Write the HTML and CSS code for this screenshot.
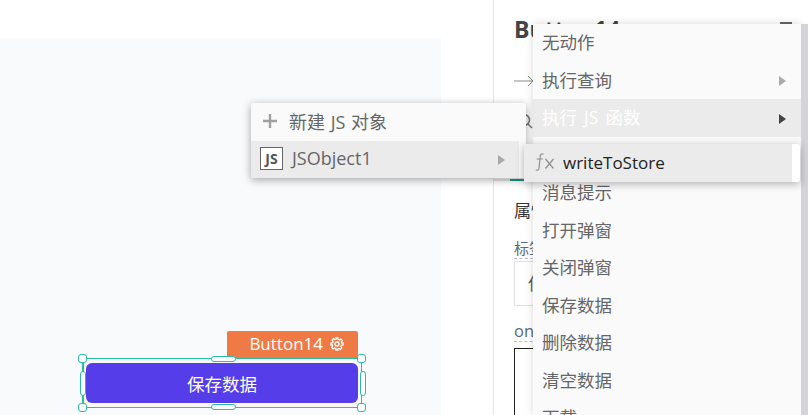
FILE: index.html
```html
<!DOCTYPE html>
<html lang="zh">
<head>
<meta charset="UTF-8" />
<title>Button14</title>
<link rel="stylesheet" href="styles.css">
</head>
<body>
<div class="workspace">
  <div class="canvas">
    <div class="widget">
      <div class="widget-tag">
        <span>Button14</span>
        <svg class="gear" width="14" height="14" viewBox="0 0 14 14" fill="none" stroke="#fff" stroke-width="1.3">
          <circle cx="7" cy="7" r="2"/>
          <path d="M6 1h2l.3 1.6 1.2.5 1.4-.9 1.4 1.4-.9 1.4.5 1.2L13 6v2l-1.6.3-.5 1.2.9 1.4-1.4 1.4-1.4-.9-1.2.5L8 13H6l-.3-1.6-1.2-.5-1.4.9-1.4-1.4.9-1.4-.5-1.2L1 8V6l1.6-.3.5-1.2-.9-1.4 1.4-1.4 1.4.9 1.2-.5z"/>
        </svg>
      </div>
      <div class="widget-frame">
        <button class="save-btn" type="button">保存数据</button>
        <i class="handle corner tl"></i>
        <i class="handle corner tr"></i>
        <i class="handle corner bl"></i>
        <i class="handle corner br"></i>
        <i class="handle horiz top"></i>
        <i class="handle horiz bottom"></i>
        <i class="handle vert left"></i>
        <i class="handle vert right"></i>
      </div>
    </div>
  </div>

  <aside class="panel">
    <div class="panel-title">
      <span>Button14</span>
      <i class="title-icon"></i>
    </div>
    <div class="panel-arrow">
      <svg width="20" height="12" viewBox="0 0 20 12" fill="none" stroke="#8a8a8a" stroke-width="1">
        <path d="M0 6h19M14 1l5 5-5 5"/>
      </svg>
    </div>
    <div class="panel-search">
      <svg width="16" height="16" viewBox="0 0 16 16" fill="none" stroke="#777" stroke-width="1.5">
        <circle cx="7" cy="7" r="5.5"/>
        <path d="M11 11l4 4"/>
      </svg>
    </div>
    <div class="panel-tabs"><i class="tab-active"></i></div>
    <div class="section-title">属性</div>
    <div class="field-label">标签</div>
    <div class="field-input">保存数据</div>
    <div class="field-label on">onClick</div>
    <div class="field-code"></div>
  </aside>
</div>

<!-- 动作菜单 -->
<ul class="menu menu-actions">
  <li>无动作</li>
  <li>执行查询<i class="caret"></i></li>
  <li class="active">执行 JS 函数<i class="caret dark"></i></li>
  <li></li>
  <li>消息提示</li>
  <li>打开弹窗</li>
  <li>关闭弹窗</li>
  <li>保存数据</li>
  <li>删除数据</li>
  <li>清空数据</li>
  <li>下载</li>
</ul>
<div class="menu-strip"></div>

<ul class="menu menu-js">
  <li>
    <svg class="plus" width="16" height="16" viewBox="0 0 16 16" stroke="#a0a0a0" stroke-width="2.4">
      <path d="M8 1v14M1 8h14"/>
    </svg>
    新建 JS 对象
  </li>
  <li class="hover">
    <span class="js-icon">JS</span>
    JSObject1
    <i class="caret"></i>
  </li>
</ul>

<ul class="menu menu-fn">
  <li class="hover">
    <svg class="fx" width="21" height="22" viewBox="0 0 21 22" fill="none" stroke="#8f8f8f" stroke-width="1.2">
      <path d="M9.5 3.2C7.5 2.4 6.4 3.4 6.2 5.5L5 17c-.2 2-1.3 2.7-3.2 2M2.5 8H9M11.5 8l8 9.5M19.5 8l-8 9.5"/>
    </svg>
    writeToStore
  </li>
</ul>
</body>
</html>
```

FILE: styles.css
```css
/* 基础 */
body {
  margin: 0;
  height: 415px;
  overflow: hidden;
  position: relative;
  background: #fff;
  font-family: "Open Sans", "Noto Sans CJK SC", sans-serif;
  color: #444;
}
.workspace {
  display: flex;
  height: 415px;
}
svg {
  display: block;
}

/* 画布 */
.canvas {
  width: 441px;
  margin: 38px 52px 0 0;
  background: #f8fafc;
  position: relative;
}
.widget {
  position: absolute;
  left: 82px;
  top: 293px;
  width: 280px;
}
.widget-tag {
  display: flex;
  align-items: center;
  justify-content: flex-end;
  gap: 7px;
  width: 131px;
  height: 27px;
  margin-left: 145px;
  padding: 0 14px 2px 0;
  box-sizing: border-box;
  background: #f07a45;
  border-radius: 2px 2px 0 0;
  color: #fff;
  font-size: 17px;
}
.widget-frame {
  position: relative;
  height: 50px;
  box-sizing: border-box;
  border: 1px solid #2cbba6;
  border-left-width: 2px;
  padding: 4px 4px 4px 2px;
}
.save-btn {
  display: block;
  width: 272px;
  height: 40px;
  border: none;
  border-radius: 6px;
  background: #553de9;
  color: #fff;
  font-family: inherit;
  font-size: 17.5px;
}
.handle {
  position: absolute;
  box-sizing: border-box;
  background: #fff;
  border: 1.5px solid #2cbba6;
  border-radius: 3px;
}
.corner { width: 9px; height: 9px; }
.tl { left: -6px; top: -5px; }
.tr { right: -5px; top: -5px; }
.bl { left: -6px; bottom: -5px; }
.br { right: -5px; bottom: -5px; }
.horiz { width: 25px; height: 6px; left: 127px; }
.top { top: -3px; }
.bottom { bottom: -3px; }
.vert { width: 6px; height: 25px; top: 12px; }
.left { left: -4px; }
.right { right: -5px; }

/* 属性面板 */
.panel {
  flex: 1;
  border-left: 1px solid #e6e6e6;
  padding-left: 20px;
  position: relative;
  min-width: 0;
  overflow: hidden;
}
.panel-title {
  display: flex;
  justify-content: space-between;
  align-items: center;
  height: 30px;
  margin-top: 14px;
  padding-right: 16px;
  font-size: 23px;
  font-weight: 700;
  color: #444;
}
.title-icon {
  width: 12px;
  height: 3px;
  margin-bottom: 12px;
  background: #666;
}
.panel-arrow {
  height: 12px;
  margin-top: 31px;
}
.panel-search {
  height: 16px;
  margin: 26px 0 0 3px;
}
.panel-tabs {
  height: 2px;
  margin: 50px 0 0 -20px;
  background: #e8e8e8;
}
.tab-active {
  display: block;
  width: 16px;
  height: 2px;
  margin-left: 16px;
  background: #17a08a;
}
.section-title {
  margin-top: 17px;
  font-size: 17px;
  line-height: 26px;
  color: #333;
}
.field-label {
  display: table;
  margin-top: 14px;
  font-size: 15px;
  line-height: 20px;
  color: #5a6a80;
  border-bottom: 1px dashed #b8bcc4;
}
.field-input {
  width: 260px;
  height: 45px;
  margin-top: 2px;
  box-sizing: border-box;
  border: 1px solid #e0e0e0;
  padding-left: 13px;
  font-size: 17px;
  line-height: 43px;
  color: #555;
}
.field-label.on {
  margin-top: 15px;
  font-size: 16.5px;
}
.field-code {
  width: 260px;
  height: 80px;
  margin-top: 6px;
  box-sizing: border-box;
  border: 1px solid #222;
}

/* 下拉菜单 */
.menu {
  position: absolute;
  margin: 0;
  padding: 0;
  list-style: none;
  box-sizing: border-box;
  background: #fafafa;
  font-size: 17.5px;
  word-spacing: 2.5px;
  color: #666;
  overflow: hidden;
}
.menu li {
  display: flex;
  align-items: center;
  height: 37.5px;
  padding-bottom: 2px;
  box-sizing: border-box;
  position: relative;
}
.caret {
  position: absolute;
  top: 50%;
  margin-top: -4px;
  border-left: 7px solid #aaa;
  border-top: 5px solid transparent;
  border-bottom: 5px solid transparent;
}
.caret.dark { border-left-color: #444; }

.menu-actions {
  left: 533px;
  top: 24px;
  width: 268px;
  height: 391px;
  box-shadow: 0 0 8px rgba(0, 0, 0, 0.16);
}
.menu-actions li { padding-left: 9px; }
.menu-actions .caret { left: 246px; }
.menu-actions .active {
  background: #ebebeb;
  color: #fff;
}
.menu-strip {
  position: absolute;
  left: 801px;
  top: 24px;
  width: 7px;
  height: 391px;
  background: #d3d3d8;
}

.menu-js {
  left: 251px;
  top: 103px;
  width: 275px;
  height: 75px;
  border-radius: 2px;
  box-shadow: 0 2px 8px rgba(0, 0, 0, 0.35);
  word-spacing: 1px;
}
.menu-js li {
  width: 268px;
  padding-left: 11px;
  font-size: 18px;
}
.menu-js .plus { margin-right: 11px; }
.menu-js .caret { left: 247px; }
.hover { background: #ebebeb; }
.js-icon {
  width: 23px;
  height: 23px;
  margin: 0 9px 0 -2px;
  box-sizing: border-box;
  border: 1px solid #666;
  background: #fff;
  color: #555;
  font-size: 14px;
  font-weight: 700;
  line-height: 21px;
  text-align: center;
}

.menu-fn {
  left: 524px;
  top: 144px;
  width: 276px;
  height: 38px;
  background: #fff;
  border-radius: 2px;
  box-shadow: 0 2px 8px rgba(0, 0, 0, 0.3);
  color: #222;
}
.menu-fn li {
  width: 268px;
  height: 38px;
  padding-left: 10px;
  font-size: 17px;
}
.menu-fn .fx { margin-right: 8px; }
```
